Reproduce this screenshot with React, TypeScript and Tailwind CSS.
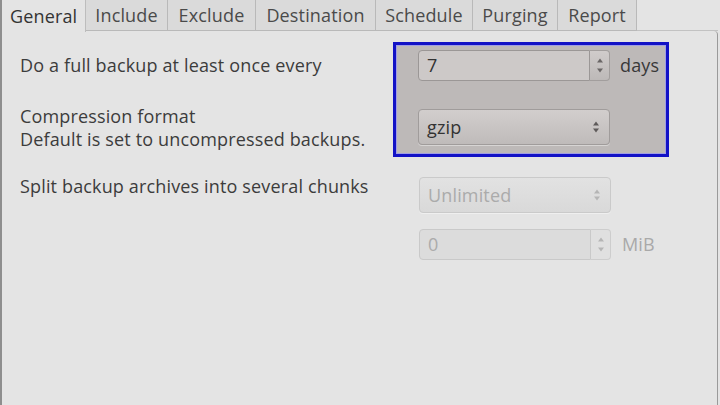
import React from 'react';

// タブの定義（幅はスクリーンショットに合わせる）
const tabs = [
  { label: 'General', width: 'w-[84px]', active: true },
  { label: 'Include', width: 'w-[82px]' },
  { label: 'Exclude', width: 'w-[88px]' },
  { label: 'Destination', width: 'w-[120px]' },
  { label: 'Schedule', width: 'w-[97px]' },
  { label: 'Purging', width: 'w-[85px]' },
  { label: 'Report', width: 'w-[79px]' },
];

function Arrows({ height, color }: { height: number; color: string }) {
  return (
    <svg width="8" height={height} viewBox={`0 0 8 ${height}`}>
      <path d="M4 0.5 L7 4.5 H1 Z" fill={color} />
      <path d={`M4 ${height - 0.5} L7 ${height - 4.5} H1 Z`} fill={color} />
    </svg>
  );
}

function SpinField({ value, disabled }: { value: string; disabled?: boolean }) {
  const field = disabled
    ? 'border-[#c9c9c9] bg-[#dcdcdc] text-[#ababab]'
    : 'border-[#9b9796] bg-[#cdc9c8] text-[#333]';
  const button = disabled
    ? 'border-[#cdcdcd] bg-[#e0e0e0]'
    : 'border-[#a29e9d] bg-gradient-to-b from-[#d0cccb] to-[#bdb9b8]';
  return (
    <div className="flex h-[31px] w-[192px]">
      <div className={`flex-1 flex items-center pl-[8px] border rounded-l-[4px] ${field}`}>{value}</div>
      <div className={`w-[20px] flex items-center justify-center border border-l-0 rounded-r-[4px] ${button}`}>
        <Arrows height={15} color={disabled ? '#b5b5b5' : '#6a6666'} />
      </div>
    </div>
  );
}

function Combo({ value, disabled }: { value: string; disabled?: boolean }) {
  const style = disabled
    ? 'border-[#cacaca] bg-gradient-to-b from-[#e2e2e2] to-[#d9d9d9] text-[#ababab]'
    : 'border-[#a09c9b] bg-gradient-to-b from-[#d2cecd] to-[#bfbbba] text-[#333]';
  return (
    <div className={`flex h-[36px] w-[192px] items-center justify-between pl-[8px] pr-[9px] border rounded-[4px] shadow-[0_1px_0_rgba(255,255,255,0.4)] ${style}`}>
      <span>{value}</span>
      <Arrows height={12} color={disabled ? '#b5b5b5' : '#5e5a5a'} />
    </div>
  );
}

export default function App() {
  return (
    <div className="w-[720px] h-[405px] overflow-hidden bg-[#e4e4e4] flex flex-col font-['Open_Sans','DejaVu_Sans',sans-serif] text-[18px] tracking-[0.15px] text-[#3c3c3c] border-l-[2px] border-l-[#8e8e8e]">
      {/* タブ */}
      <div className="flex h-[31px] shrink-0">
        {tabs.map(tab =>
          tab.active ? (
            <div key={tab.label} className={`${tab.width} h-[32px] flex items-center pl-[8px] bg-[#e4e4e4] border-r border-[#bdbdbd] text-[#333] relative z-10`}>
              {tab.label}
            </div>
          ) : (
            <div key={tab.label} className={`${tab.width} flex items-center justify-center bg-[#dadada] border-r border-b border-[#b9b9b9] text-[#4a4a4a]`}>
              {tab.label}
            </div>
          )
        )}
        <div className="flex-1 border-b border-[#c2c2c2] mr-[2px]" />
      </div>

      {/* パネル */}
      <div className="flex-1 mr-[2px] border-r border-[#9a9a9a] rounded-tr-[4px] pl-[18px] pt-[11px] leading-[23px]">
        <div className="flex items-start">
          <div className="w-[373px] pt-[8px]">
            <div className="h-[31px] flex items-center whitespace-nowrap">Do a full backup at least once every</div>
            <div className="mt-[24px] whitespace-nowrap">
              <div>Compression format</div>
              <div>Default is set to uncompressed backups.</div>
            </div>
          </div>
          <div className="w-[276px] h-[115px] border-[3px] border-[#1212c6] bg-[#bdb9b8] pl-[22px] pt-[5px] shadow-[inset_0_0_0_1px_rgba(140,140,255,0.6)]">
            <div className="flex items-center gap-[10px]">
              <SpinField value="7" />
              <span className="text-[#383838]">days</span>
            </div>
            <div className="mt-[28px]">
              <Combo value="gzip" />
            </div>
          </div>
        </div>

        <div className="flex items-start mt-[18px]">
          <div className="w-[399px] whitespace-nowrap">Split backup archives into several chunks</div>
          <div className="mt-[2px]">
            <Combo value="Unlimited" disabled />
          </div>
        </div>

        <div className="flex items-center mt-[16px] pl-[399px] gap-[11px]">
          <SpinField value="0" disabled />
          <span className="text-[#a9a9a9]">MiB</span>
        </div>
      </div>
    </div>
  );
}
